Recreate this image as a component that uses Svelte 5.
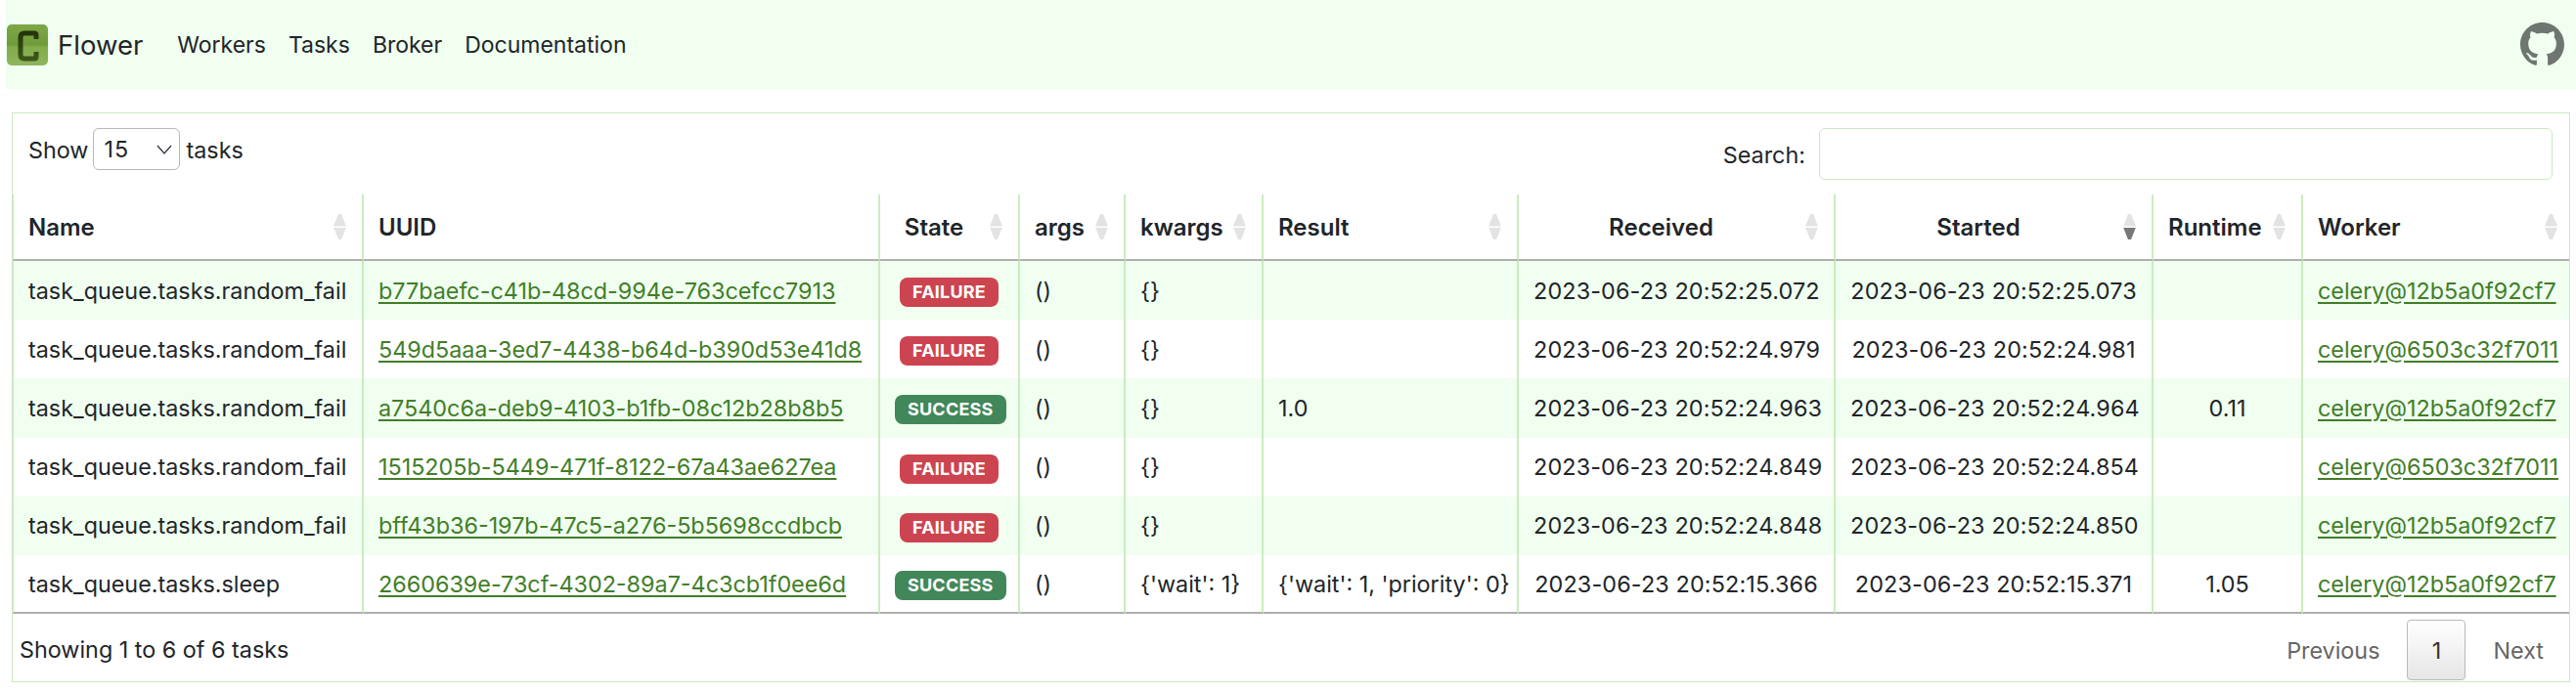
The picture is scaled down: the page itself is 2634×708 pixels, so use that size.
<script>
  const columns = [
    { label: 'Name', width: 359, sortable: true },
    { label: 'UUID', width: 528 },
    { label: 'State', width: 143, center: true, sortable: true },
    { label: 'args', width: 108, sortable: true },
    { label: 'kwargs', width: 141, sortable: true },
    { label: 'Result', width: 261, sortable: true },
    { label: 'Received', width: 324, center: true, sortable: true },
    { label: 'Started', width: 325, center: true, sortable: true, sorted: true },
    { label: 'Runtime', width: 153, center: true, sortable: true },
    { label: 'Worker', width: 272, sortable: true },
  ];

  const tasks = [
    { name: 'task_queue.tasks.random_fail', uuid: 'b77baefc-c41b-48cd-994e-763cefcc7913', state: 'FAILURE', kwargs: '{}', result: '', received: '2023-06-23 20:52:25.072', started: '2023-06-23 20:52:25.073', runtime: '', worker: 'celery@12b5a0f92cf7' },
    { name: 'task_queue.tasks.random_fail', uuid: '549d5aaa-3ed7-4438-b64d-b390d53e41d8', state: 'FAILURE', kwargs: '{}', result: '', received: '2023-06-23 20:52:24.979', started: '2023-06-23 20:52:24.981', runtime: '', worker: 'celery@6503c32f7011' },
    { name: 'task_queue.tasks.random_fail', uuid: 'a7540c6a-deb9-4103-b1fb-08c12b28b8b5', state: 'SUCCESS', kwargs: '{}', result: '1.0', received: '2023-06-23 20:52:24.963', started: '2023-06-23 20:52:24.964', runtime: '0.11', worker: 'celery@12b5a0f92cf7' },
    { name: 'task_queue.tasks.random_fail', uuid: '1515205b-5449-471f-8122-67a43ae627ea', state: 'FAILURE', kwargs: '{}', result: '', received: '2023-06-23 20:52:24.849', started: '2023-06-23 20:52:24.854', runtime: '', worker: 'celery@6503c32f7011' },
    { name: 'task_queue.tasks.random_fail', uuid: 'bff43b36-197b-47c5-a276-5b5698ccdbcb', state: 'FAILURE', kwargs: '{}', result: '', received: '2023-06-23 20:52:24.848', started: '2023-06-23 20:52:24.850', runtime: '', worker: 'celery@12b5a0f92cf7' },
    { name: 'task_queue.tasks.sleep', uuid: '2660639e-73cf-4302-89a7-4c3cb1f0ee6d', state: 'SUCCESS', kwargs: "{'wait': 1}", result: "{'wait': 1, 'priority': 0}", received: '2023-06-23 20:52:15.366', started: '2023-06-23 20:52:15.371', runtime: '1.05', worker: 'celery@12b5a0f92cf7' },
  ];
</script>

<div class="page">
  <nav class="navbar">
    <a class="brand" href="#top">
      <svg class="logo" viewBox="0 0 42 42" aria-hidden="true">
        <defs>
          <linearGradient id="logo-bg" x1="0" y1="0" x2="0" y2="1">
            <stop offset="0" stop-color="#7ea646" />
            <stop offset="0.5" stop-color="#719c3a" />
            <stop offset="0.55" stop-color="#82ab4a" />
            <stop offset="1" stop-color="#8fb65e" />
          </linearGradient>
          <linearGradient id="logo-c" x1="0" y1="0" x2="0" y2="1">
            <stop offset="0" stop-color="#24340c" />
            <stop offset="1" stop-color="#3c5719" />
          </linearGradient>
        </defs>
        <rect width="42" height="42" rx="5" fill="url(#logo-bg)" />
        <path d="M30 15 V11 Q30 9 28 9 H18 Q14 9 14 13 V31 Q14 35 18 35 H28 Q30 35 30 33 V28" fill="none" stroke="url(#logo-c)" stroke-width="5" />
      </svg>
      <span>Flower</span>
    </a>
    <a class="nav-link" href="#top">Workers</a>
    <a class="nav-link" href="#top">Tasks</a>
    <a class="nav-link" href="#top">Broker</a>
    <a class="nav-link" href="#top">Documentation</a>
    <svg class="github" viewBox="0 0 16 16" aria-hidden="true">
      <path d="M8 0C3.58 0 0 3.58 0 8c0 3.54 2.29 6.53 5.47 7.59.4.07.55-.17.55-.38 0-.19-.01-.82-.01-1.49-2.01.37-2.53-.49-2.69-.94-.09-.23-.48-.94-.82-1.13-.28-.15-.68-.52-.01-.53.63-.01 1.08.58 1.23.82.72 1.21 1.87.87 2.33.66.07-.52.28-.87.51-1.07-1.78-.2-3.64-.89-3.64-3.95 0-.87.31-1.59.82-2.15-.08-.2-.36-1.02.08-2.12 0 0 .67-.21 2.2.82.64-.18 1.32-.27 2-.27.68 0 1.36.09 2 .27 1.53-1.04 2.2-.82 2.2-.82.44 1.1.16 1.92.08 2.12.51.56.82 1.27.82 2.15 0 3.07-1.87 3.75-3.65 3.95.29.25.54.73.54 1.48 0 1.07-.01 1.93-.01 2.2 0 .21.15.46.55.38A8.013 8.013 0 0016 8c0-4.42-3.58-8-8-8z" />
    </svg>
  </nav>

  <section class="card">
    <div class="toolbar">
      <div class="length">
        <span class="label">Show</span>
        <span class="select">
          <span class="value">15</span>
          <svg viewBox="0 0 16 16" aria-hidden="true"><path d="M1 4l7 8 7-8" fill="none" stroke="#343a40" stroke-width="1.3" /></svg>
        </span>
        <span class="label">tasks</span>
      </div>
      <div class="search">
        <span class="label">Search:</span>
        <span class="search-input"></span>
      </div>
    </div>

    <table>
      <colgroup>
        {#each columns as col}
          <col style="width: {col.width}px" />
        {/each}
      </colgroup>
      <thead>
        <tr>
          {#each columns as col}
            <th class:center={col.center}>
              {col.label}
              {#if col.sortable}
                <span class="sort">
                  <i class="up"></i>
                  <i class="down" class:active={col.sorted}></i>
                </span>
              {/if}
            </th>
          {/each}
        </tr>
      </thead>
      <tbody>
        {#each tasks as task}
          <tr>
            <td>{task.name}</td>
            <td><a href="#top">{task.uuid}</a></td>
            <td class="center"><span class="badge" class:success={task.state === 'SUCCESS'}>{task.state}</span></td>
            <td>()</td>
            <td>{task.kwargs}</td>
            <td>{task.result}</td>
            <td class="center date">{task.received}</td>
            <td class="center date">{task.started}</td>
            <td class="center">{task.runtime}</td>
            <td><a href="#top">{task.worker}</a></td>
          </tr>
        {/each}
      </tbody>
    </table>

    <div class="footer">
      <div class="info">Showing 1 to 6 of 6 tasks</div>
      <div class="pagination">
        <span class="page-link">Previous</span>
        <span class="page-link current">1</span>
        <span class="page-link next">Next</span>
      </div>
    </div>
  </section>
</div>

<style>
  :global(body) {
    margin: 0;
    background: #fff;
  }

  .page {
    width: 2634px;
    height: 708px;
    overflow: hidden;
    font-family: Inter, "Liberation Sans", sans-serif;
    font-size: 23.35px;
    color: #212529;
  }

  .navbar {
    display: flex;
    align-items: center;
    height: 91px;
    margin-left: 6px;
    padding: 0 12px 0 1px;
    background: #f0fff0;
    box-sizing: border-box;
    font-size: 23px;
  }

  .brand {
    display: flex;
    align-items: center;
    gap: 10px;
    margin-right: 35px;
    font-size: 27.5px;
    color: #212529;
    text-decoration: none;
  }

  .logo {
    width: 42px;
    height: 42px;
  }

  .nav-link {
    margin-right: 23px;
    color: #212529;
    text-decoration: none;
  }

  .github {
    width: 45px;
    height: 45px;
    margin-left: auto;
    fill: #6f7570;
  }

  .card {
    margin: 24px 6px 0 12px;
    height: 583px;
    border: 1px solid #cbe8bf;
    box-sizing: border-box;
  }

  .toolbar {
    display: flex;
    justify-content: space-between;
    height: 83px;
    padding: 15px 17px 0 16px;
    box-sizing: border-box;
  }

  .label {
    margin-top: 2px;
  }

  .length {
    display: flex;
    align-items: center;
    gap: 6px;
    height: 43px;
  }

  .select {
    display: flex;
    align-items: center;
    justify-content: space-between;
    width: 89px;
    height: 43px;
    margin-left: -1px;
    padding: 0 7px 0 10px;
    border: 1px solid #b5b9bd;
    border-radius: 6px;
    box-sizing: border-box;
  }

  .value {
    letter-spacing: 1px;
  }

  .select svg {
    width: 16px;
    height: 16px;
  }

  .search {
    display: flex;
    align-items: center;
    gap: 14px;
    height: 53px;
  }

  .search-input {
    width: 750px;
    height: 53px;
    border: 1px solid #cbe8bf;
    border-radius: 6px;
    box-sizing: border-box;
  }

  table {
    width: 2614px;
    table-layout: fixed;
    border-collapse: separate;
    border-spacing: 0;
  }

  th {
    position: relative;
    height: 68px;
    padding: 0 46px 0 15px;
    text-align: left;
    font-size: 24px;
    font-weight: 600;
    border-right: 2px solid #cbecbf;
    border-bottom: 2px solid #adb0ab;
    box-sizing: border-box;
    white-space: nowrap;
  }

  td {
    height: 60.2px;
    padding: 0 15px;
    border-right: 2px solid #cbecbf;
    box-sizing: border-box;
    white-space: nowrap;
  }

  th:first-child,
  td:first-child {
    padding-left: 15px;
    border-left: 1px solid #cbecbf;
  }

  th:last-child,
  td:last-child {
    border-right: none;
  }

  .center {
    text-align: center;
  }

  .date {
    letter-spacing: 0.15px;
  }

  tbody tr:nth-child(odd) {
    background: #f0fff0;
  }

  tbody tr:last-child td {
    border-bottom: 2px solid #adb0ab;
  }

  td a {
    color: #417e27;
    text-decoration: underline;
    text-underline-offset: 3px;
  }

  .sort {
    position: absolute;
    top: 50%;
    right: 16px;
    display: flex;
    flex-direction: column;
    gap: 1px;
    transform: translateY(-50%);
  }

  th:last-child .sort {
    right: 12px;
  }

  .sort i {
    display: block;
    width: 13px;
    height: 12.5px;
    background: #e2e3e3;
  }

  .sort .up {
    clip-path: polygon(38% 0, 62% 0, 100% 100%, 0 100%);
  }

  .sort .down {
    clip-path: polygon(0 0, 100% 0, 62% 100%, 38% 100%);
  }

  .sort .down.active {
    background: #77787a;
  }

  .badge {
    display: inline-block;
    margin-top: 4px;
    padding: 5px 13px;
    border-radius: 8px;
    background: #cc444f;
    color: #fff;
    font-size: 18px;
    font-weight: 700;
    letter-spacing: 0.2px;
    line-height: 20px;
  }

  .badge.success {
    background: #41875a;
  }

  .footer {
    display: flex;
    justify-content: space-between;
    align-items: flex-start;
  }

  .info {
    padding: 22px 0 0 7px;
  }

  .pagination {
    display: flex;
    align-items: center;
    padding-top: 6px;
    color: #666;
  }

  .page-link {
    padding: 0 28px;
  }

  .page-link.next {
    padding-right: 26px;
  }

  .page-link.current {
    display: flex;
    align-items: center;
    justify-content: center;
    width: 60px;
    height: 62px;
    padding: 0;
    border: 1px solid #b9b9b9;
    border-radius: 4px;
    background: linear-gradient(#fff, #e6e6e6);
    color: #333;
    box-sizing: border-box;
  }
</style>
